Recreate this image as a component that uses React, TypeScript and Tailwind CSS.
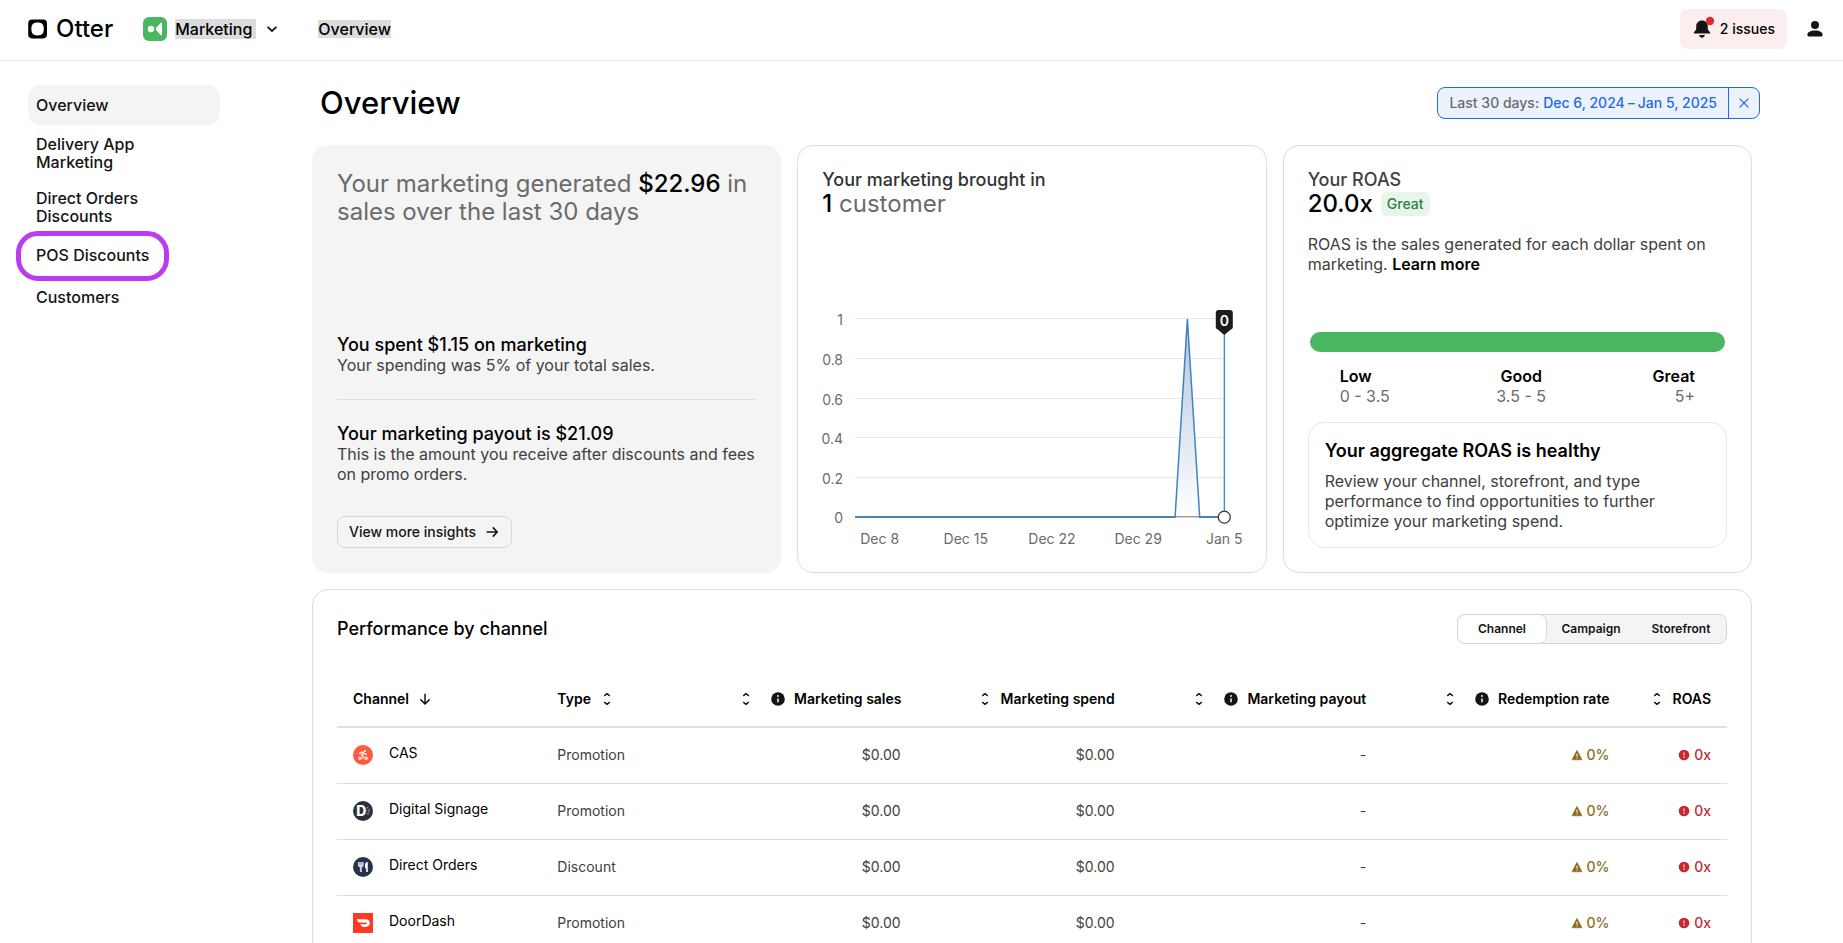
import { useState } from 'react';
import type { ReactNode } from 'react';
import clsx from 'clsx';

interface ChannelRow {
  name: string;
  type: string;
  icon: ReactNode;
}

interface Column {
  label: string;
  width: string;
  info?: boolean;
}

const navItems = [
  { label: 'Overview', active: true },
  { label: 'Delivery App Marketing' },
  { label: 'Direct Orders Discounts' },
  { label: 'POS Discounts', highlighted: true },
  { label: 'Customers' },
];

const numberColumns: Column[] = [
  { label: 'Marketing sales', width: 'w-[14%]', info: true },
  { label: 'Marketing spend', width: 'w-[15.4%]' },
  { label: 'Marketing payout', width: 'w-[18.1%]', info: true },
  { label: 'Redemption rate', width: 'w-[17.5%]', info: true },
  { label: 'ROAS', width: 'w-[7.3%]' },
];

const segments = ['Channel', 'Campaign', 'Storefront'];

function SortIcon() {
  return (
    <svg className="h-4 w-4 shrink-0" viewBox="0 0 16 16" fill="none" stroke="#1a1a1a" strokeWidth="1.4" strokeLinecap="round" strokeLinejoin="round">
      <path d="M5.6 4.6 8 2.6l2.4 2M5.6 11.4 8 13.4l2.4-2" />
    </svg>
  );
}

function InfoIcon() {
  return (
    <svg className="h-4 w-4 shrink-0" viewBox="0 0 16 16">
      <circle cx="8" cy="8" r="6.8" fill="#141414" />
      <circle cx="8" cy="5" r="0.9" fill="#fff" />
      <path d="M8 7.4v3.8" stroke="#fff" strokeWidth="1.5" />
    </svg>
  );
}

function WarningIcon() {
  return (
    <svg className="h-3 w-3 shrink-0" viewBox="0 0 12 12">
      <path d="M6 1.2 11 10.8H1z" fill="#8a6d1f" stroke="#8a6d1f" strokeWidth="0.6" strokeLinejoin="round" />
      <path d="M6 4.8v2.7M6 8.4v1.1" stroke="#fff" strokeWidth="1.1" />
    </svg>
  );
}

function AlertIcon() {
  return (
    <svg className="h-3 w-3 shrink-0" viewBox="0 0 12 12">
      <circle cx="6" cy="6" r="5.3" fill="#c62831" />
      <path d="M6 3.2v3.4M6 7.6v1.3" stroke="#fff" strokeOpacity="0.8" strokeWidth="1.1" />
    </svg>
  );
}

function CasIcon() {
  return (
    <svg className="h-5 w-5" viewBox="0 0 20 20">
      <circle cx="10" cy="10" r="10" fill="#ff5a3c" />
      <g fill="none" stroke="#fff" strokeWidth="1.2" strokeLinecap="round" strokeLinejoin="round">
        <circle cx="6.9" cy="13.2" r="1.2" />
        <circle cx="13.1" cy="13.2" r="1.2" />
        <path d="M9.8 13.2 10.4 11.2 8.4 9.8l2.3-2.2 1.2 1.6h1.5M6.4 8.4l1.8-1.2h2" />
      </g>
      <circle cx="11.9" cy="6" r="1.1" fill="#fff" />
    </svg>
  );
}

function SignageIcon() {
  return (
    <svg className="h-5 w-5" viewBox="0 0 20 20">
      <circle cx="10" cy="10" r="10" fill="#2b303d" />
      <text x="8.4" y="15" textAnchor="middle" fontSize="14" fontWeight="800" fill="#fff">D</text>
      <path d="m13.6 7.4 1.8-1.6M14.4 10l2.4-.4M13.8 12.2l1.6 1.6M15.6 8.2l.8-.4M15.4 11.6l1 .4" stroke="#c9ccd3" strokeWidth="0.8" />
    </svg>
  );
}

function DirectIcon() {
  return (
    <svg className="h-5 w-5" viewBox="0 0 20 20">
      <circle cx="10" cy="10" r="10" fill="#26344b" />
      <path d="M5 5h5.6v3.4a1.8 1.8 0 0 1-1.8 1.8V15H6.9v-4.8A1.8 1.8 0 0 1 5 8.4z" fill="#d4d8de" />
      <path d="M6.9 5v2.6M8.7 5v2.6" stroke="#26344b" strokeWidth="0.4" />
      <path d="M14.8 5v10h-1.6v-3.8H12V7.6C12 6 13.2 5 14.8 5z" fill="#fff" />
    </svg>
  );
}

function DoorDashIcon() {
  return (
    <svg className="h-5 w-5" viewBox="0 0 20 20">
      <path d="M0 0h20v20H0z" fill="#ff3a24" />
      <path d="M3.4 6.2h9.4c2.3 0 4 1.7 4 3.8s-1.7 3.9-3.8 3.9H9.8c-.3 0-.5-.1-.7-.3L7 11.2h5.8c.6 0 1-.4 1-.8s-.4-.8-1-.8H6.2c-.3 0-.5-.1-.7-.3z" fill="#fff" />
    </svg>
  );
}

const rows: ChannelRow[] = [
  { name: 'CAS', type: 'Promotion', icon: <CasIcon /> },
  { name: 'Digital Signage', type: 'Promotion', icon: <SignageIcon /> },
  { name: 'Direct Orders', type: 'Discount', icon: <DirectIcon /> },
  { name: 'DoorDash', type: 'Promotion', icon: <DoorDashIcon /> },
];

function Header() {
  return (
    <header className="flex h-[61px] items-center justify-between border-b border-[#e6e6e6] pr-4 pb-0.5 pl-7">
      <div className="flex items-center">
        <a href="#home" className="flex items-center gap-2">
          <svg className="h-5 w-5" viewBox="0 0 20 20">
            <path
              fillRule="evenodd"
              d="M4 .6h11.2A3.8 3.8 0 0 1 19 4.400v11.2a3.8 3.8 0 0 1-3.8 3.8H4A3.8 3.8 0 0 1 .2 15.6V4.400A3.8 3.8 0 0 1 4 .6zM9.6 3.6C5 3.6 3.4 5.6 3.4 10S5 16.4 9.6 16.4 15.8 14.4 15.8 10 14.2 3.6 9.6 3.6z"
              fill="#000"
            />
          </svg>
          <span className="text-2xl leading-7 font-medium text-black">Otter</span>
        </a>
        <button className="ml-[30px] flex items-center gap-2">
          <svg className="h-6 w-6" viewBox="0 0 24 24">
            <rect width="24" height="24" rx="6" fill="#4ab661" />
            <circle cx="8" cy="12" r="3.2" fill="#fff" />
            <path d="M19 6.4v11.2c0 .9-.8 1.1-1.4.5l-4.4-4.900a1.8 1.8 0 0 1 0-2.400l4.400-4.900c.6-.6 1.400-.4 1.400.5z" fill="#fff" />
          </svg>
          <span className="bg-[#dcdcdc] pr-1 text-base leading-5 font-medium">Marketing</span>
          <svg className="h-4 w-4" viewBox="0 0 16 16" fill="none" stroke="#141414" strokeWidth="1.8">
            <path d="m3.6 5.8 4.4 4.2 4.400-4.200" />
          </svg>
        </button>
        <span className="ml-[38px] bg-[#dcdcdc] text-base leading-[18px] font-medium">Overview</span>
      </div>
      <div className="flex items-center gap-4">
        <button className="flex h-10 items-center gap-2 rounded-lg bg-[#fbeeee] px-3 text-sm font-medium">
          <svg className="h-5 w-5 overflow-visible" viewBox="0 0 20 20">
            <path d="M10 1.6c-3.5 0-5.8 2.5-5.8 5.8v3.2L1.8 13.4v1h16.4v-1l-2.4-2.8V7.4c0-3.300-2.300-5.800-5.800-5.800zM7.2 16c.3 1.7 1.4 2.8 2.8 2.8s2.5-1.1 2.8-2.8z" fill="#141414" />
            <circle cx="18" cy="2" r="4.2" fill="#dc2c35" />
          </svg>
          2 issues
        </button>
        <button aria-label="Account">
          <svg className="h-6 w-6" viewBox="0 0 24 24" fill="#141414">
            <circle cx="12" cy="8" r="4" />
            <path d="M12 13.6c-4.6 0-7.6 1.8-7.6 4.2 0 1.3.7 1.8 1.8 1.8h11.6c1.1 0 1.8-.5 1.8-1.8 0-2.4-3-4.2-7.6-4.2z" />
          </svg>
        </button>
      </div>
    </header>
  );
}

function Sidebar() {
  return (
    <nav className="w-48 shrink-0 pt-6">
      <ul className="flex flex-col gap-0.5">
        {navItems.map(item => (
          <li key={item.label} className="relative">
            <a
              href="#nav"
              className={clsx(
                'flex min-h-10 items-center rounded-xl py-2 pr-14 pl-2 text-base leading-[18px] font-medium text-[#141414]',
                item.active && 'bg-[#f4f4f4]'
              )}
            >
              {item.label}
            </a>
            {item.highlighted && (
              <span className="pointer-events-none absolute -top-1 -left-3 h-[50px] w-[153px] rounded-[22px] border-5 border-[#bb3cf0]" />
            )}
          </li>
        ))}
      </ul>
    </nav>
  );
}

function DateFilter() {
  return (
    <div className="flex h-8 overflow-hidden rounded-lg border border-[#1f6ae5] bg-[#ecf2fc] text-sm font-medium">
      <button className="flex items-center gap-1 px-[11px]">
        <span className="text-[#6b6b6b]">Last 30 days:</span>
        <span className="flex gap-[3px] text-[#1f6ae5]">
          <span>Dec 6, 2024</span>
          <span>–</span>
          <span>Jan 5, 2025</span>
        </span>
      </button>
      <button aria-label="Clear date filter" className="flex w-[31px] items-center justify-center border-l border-[#1f6ae5]">
        <svg className="h-3 w-3" viewBox="0 0 12 12" stroke="#1f6ae5" strokeWidth="1.3">
          <path d="m1.6 1.6 8.8 8.8M10.4 1.6l-8.8 8.8" />
        </svg>
      </button>
    </div>
  );
}

function SummaryCard() {
  return (
    <section className="flex flex-col justify-between rounded-2xl bg-[#f4f4f4] p-[25px]">
      <h2 className="text-2xl leading-7 text-[#6b6b6b]">
        Your marketing generated <span className="font-medium text-black">$22.96</span> in sales over the last 30 days
      </h2>
      <div>
        <div className="border-b border-[#dedede] pb-6">
          <h3 className="text-lg leading-5 font-medium">You spent $1.15 on marketing</h3>
          <p className="text-base leading-5 text-[#404040]">Your spending was 5% of your total sales.</p>
        </div>
        <h3 className="mt-6 text-lg leading-5 font-medium">Your marketing payout is $21.09</h3>
        <p className="text-base leading-5 text-[#404040]">
          This is the amount you receive after discounts and fees on promo orders.
        </p>
        <button className="mt-8 flex h-8 items-center gap-2 rounded-lg border border-[#d6d6d6] px-[11px] text-sm font-medium text-[#141414]">
          View more insights
          <svg className="h-4 w-4" viewBox="0 0 16 16" fill="none" stroke="#141414" strokeWidth="1.6">
            <path d="M2.6 8h10.4M8.8 3.4 13.2 8l-4.4 4.6" />
          </svg>
        </button>
      </div>
    </section>
  );
}

const yTicks = [
  { label: '1', y: 10.5 },
  { label: '0.8', y: 50.5 },
  { label: '0.6', y: 90.5 },
  { label: '0.4', y: 129.5 },
  { label: '0.2', y: 169.5 },
  { label: '0', y: 208.5 },
];

const xTicks = [
  { label: 'Dec 8', day: 2 },
  { label: 'Dec 15', day: 9 },
  { label: 'Dec 22', day: 16 },
  { label: 'Dec 29', day: 23 },
  { label: 'Jan 5', day: 30 },
];

const dayToX = (day: number) => 33 + day * 12.3;

function CustomersChart() {
  const line = `M33 209H${dayToX(26)}L${dayToX(27)} 11L${dayToX(28)} 209H402`;

  return (
    <svg className="w-full overflow-visible" viewBox="0 0 419 240" role="img" aria-label="Customers per day">
      <defs>
        <linearGradient id="spike" x1="0" y1="0" x2="0" y2="1">
          <stop offset="0" stopColor="#a9bdd8" />
          <stop offset="1" stopColor="#ffffff" />
        </linearGradient>
      </defs>
      {yTicks.map(tick => (
        <g key={tick.label}>
          <path d={`M33 ${tick.y}H402`} stroke={tick.label === '0' ? '#555' : '#e6e6e6'} />
          <text x="21" y={tick.y + 6} textAnchor="end" fontSize="14" fill="#6b6b6b">{tick.label}</text>
        </g>
      ))}
      {xTicks.map(tick => (
        <text key={tick.label} x={dayToX(tick.day)} y="236" textAnchor="middle" fontSize="14" fill="#6b6b6b">{tick.label}</text>
      ))}
      <path d={`M${dayToX(26)} 208L${dayToX(27)} 11L${dayToX(28)} 208z`} fill="url(#spike)" fillOpacity="0.9" />
      <path d={line} fill="none" stroke="#3f83c4" strokeWidth="1.5" />
      <path d="M402 26V203" stroke="#2f86c9" strokeWidth="1.2" />
      <circle cx="402" cy="209" r="6" fill="#fff" stroke="#333" strokeWidth="1.2" />
      <path d="M396.500 2h11a3 3 0 0 1 3 3v14a3 3 0 0 1-2 2.600L402 27l-6.500-5.400a3 3 0 0 1-2-2.600V5a3 3 0 0 1 3-3z" fill="#1c1c1c" />
      <text x="402" y="18" textAnchor="middle" fontSize="14" fontWeight="600" fill="#fff">0</text>
    </svg>
  );
}

function CustomersCard() {
  return (
    <section className="flex flex-col justify-between rounded-2xl border border-[#dedede] p-6">
      <h2 className="text-2xl leading-7 text-[#6b6b6b]">
        <span className="block text-lg leading-5 font-medium text-[#333]">Your marketing brought in</span>
        <span className="font-medium text-black">1</span> customer
      </h2>
      <CustomersChart />
    </section>
  );
}

function RoasCard() {
  return (
    <section className="flex flex-col justify-between rounded-2xl border border-[#dedede] p-6">
      <div>
        <h2 className="text-lg leading-5 font-medium text-[#404040]">Your ROAS</h2>
        <div className="flex h-7 items-center gap-2">
          <span className="text-2xl leading-7 font-medium">20.0x</span>
          <span className="rounded-md bg-[#e8f5ea] px-1.5 text-sm leading-6 font-medium text-[#2f7f41]">Great</span>
        </div>
        <p className="mt-4 text-base leading-5 text-[#404040]">
          ROAS is the sales generated for each dollar spent on marketing.{' '}
          <a href="#roas" className="font-semibold text-black">Learn more</a>
        </p>
      </div>
      <div>
        <div className="mx-0.5 h-5 rounded-full bg-[#4bb661]" />
        <dl className="mt-3.5 flex justify-between px-8 text-base leading-5">
          <div>
            <dt className="font-semibold">Low</dt>
            <dd className="text-[#6b6b6b]">0 - 3.5</dd>
          </div>
          <div className="text-center">
            <dt className="font-semibold">Good</dt>
            <dd className="text-[#6b6b6b]">3.5 - 5</dd>
          </div>
          <div className="text-right">
            <dt className="font-semibold">Great</dt>
            <dd className="text-[#6b6b6b]">5+</dd>
          </div>
        </dl>
        <div className="mt-4 rounded-2xl border border-[#e8e8e8] p-4">
          <h3 className="text-lg leading-6 font-semibold">Your aggregate ROAS is healthy</h3>
          <p className="mt-2 text-base leading-5 text-[#404040]">
            Review your channel, storefront, and type performance to find opportunities to further optimize your marketing spend.
          </p>
        </div>
      </div>
    </section>
  );
}

function PerformanceTable() {
  const [segment, setSegment] = useState('Channel');

  return (
    <section className="mt-4 rounded-2xl border border-[#dedede] p-6">
      <div className="flex items-center justify-between">
        <h2 className="text-lg font-medium">Performance by channel</h2>
        <div className="flex rounded-lg border border-[#d6d6d6] bg-[#f4f4f4] text-xs font-semibold text-[#141414]">
          {segments.map(label => (
            <button
              key={label}
              aria-pressed={segment === label}
              onClick={() => setSegment(label)}
              className={clsx('-my-px h-[30px] w-[90px]', segment === label && '-mx-px rounded-lg border border-[#d6d6d6] bg-white')}
            >
              {label}
            </button>
          ))}
        </div>
      </div>

      <table className="mt-[27px] w-full table-fixed border-collapse text-sm">
        <thead>
          <tr className="h-14 border-b-2 border-[#dedede]">
            <th className="w-[14.7%] px-4 text-left font-semibold">
              <button className="flex items-center gap-2">
                Channel
                <svg className="h-4 w-4" viewBox="0 0 16 16" fill="none" stroke="#141414" strokeWidth="1.5">
                  <path d="M8 2.8v10M3.4 8.4 8 13l4.6-4.6" />
                </svg>
              </button>
            </th>
            <th className="w-[13%] px-4 text-left font-semibold">
              <button className="flex items-center gap-2">
                Type
                <SortIcon />
              </button>
            </th>
            {numberColumns.map(column => (
              <th key={column.label} className={clsx(column.width, 'px-4 font-semibold whitespace-nowrap')}>
                <button className="ml-auto flex items-center gap-2">
                  <SortIcon />
                  {column.info && <span className="ml-2"><InfoIcon /></span>}
                  {column.label}
                </button>
              </th>
            ))}
          </tr>
        </thead>
        <tbody>
          {rows.map(row => (
            <tr key={row.name} className="h-14 border-b border-[#dedede] text-right text-[#404040]">
              <td className="px-4">
                <div className="flex items-center gap-4">
                  {row.icon}
                  <span className="pb-1 text-black">{row.name}</span>
                </div>
              </td>
              <td className="px-4 text-left">{row.type}</td>
              <td className="px-4">$0.00</td>
              <td className="px-4">$0.00</td>
              <td className="px-4">-</td>
              <td className="px-4">
                <span className="flex items-center justify-end gap-1 font-medium text-[#8a6d1f]">
                  <WarningIcon />
                  0%
                </span>
              </td>
              <td className="px-4">
                <span className="flex items-center justify-end gap-1 font-medium text-[#c62831]">
                  <AlertIcon />
                  0x
                </span>
              </td>
            </tr>
          ))}
        </tbody>
      </table>
    </section>
  );
}

export default function App() {
  return (
    <div className="h-screen overflow-hidden bg-white font-['Inter',sans-serif] text-black">
      <Header />
      <div className="flex gap-7 pr-[27px] pl-7">
        <Sidebar />
        <main className="min-w-0 flex-1">
          <div className="mx-auto max-w-[1440px]">
            <div className="-mr-2 ml-2 flex h-[84px] items-center justify-between">
              <h1 className="text-[31px] font-medium">Overview</h1>
              <DateFilter />
            </div>
            <div className="grid min-h-[428px] grid-cols-3 gap-4">
              <SummaryCard />
              <CustomersCard />
              <RoasCard />
            </div>
            <PerformanceTable />
          </div>
        </main>
      </div>
    </div>
  );
}
